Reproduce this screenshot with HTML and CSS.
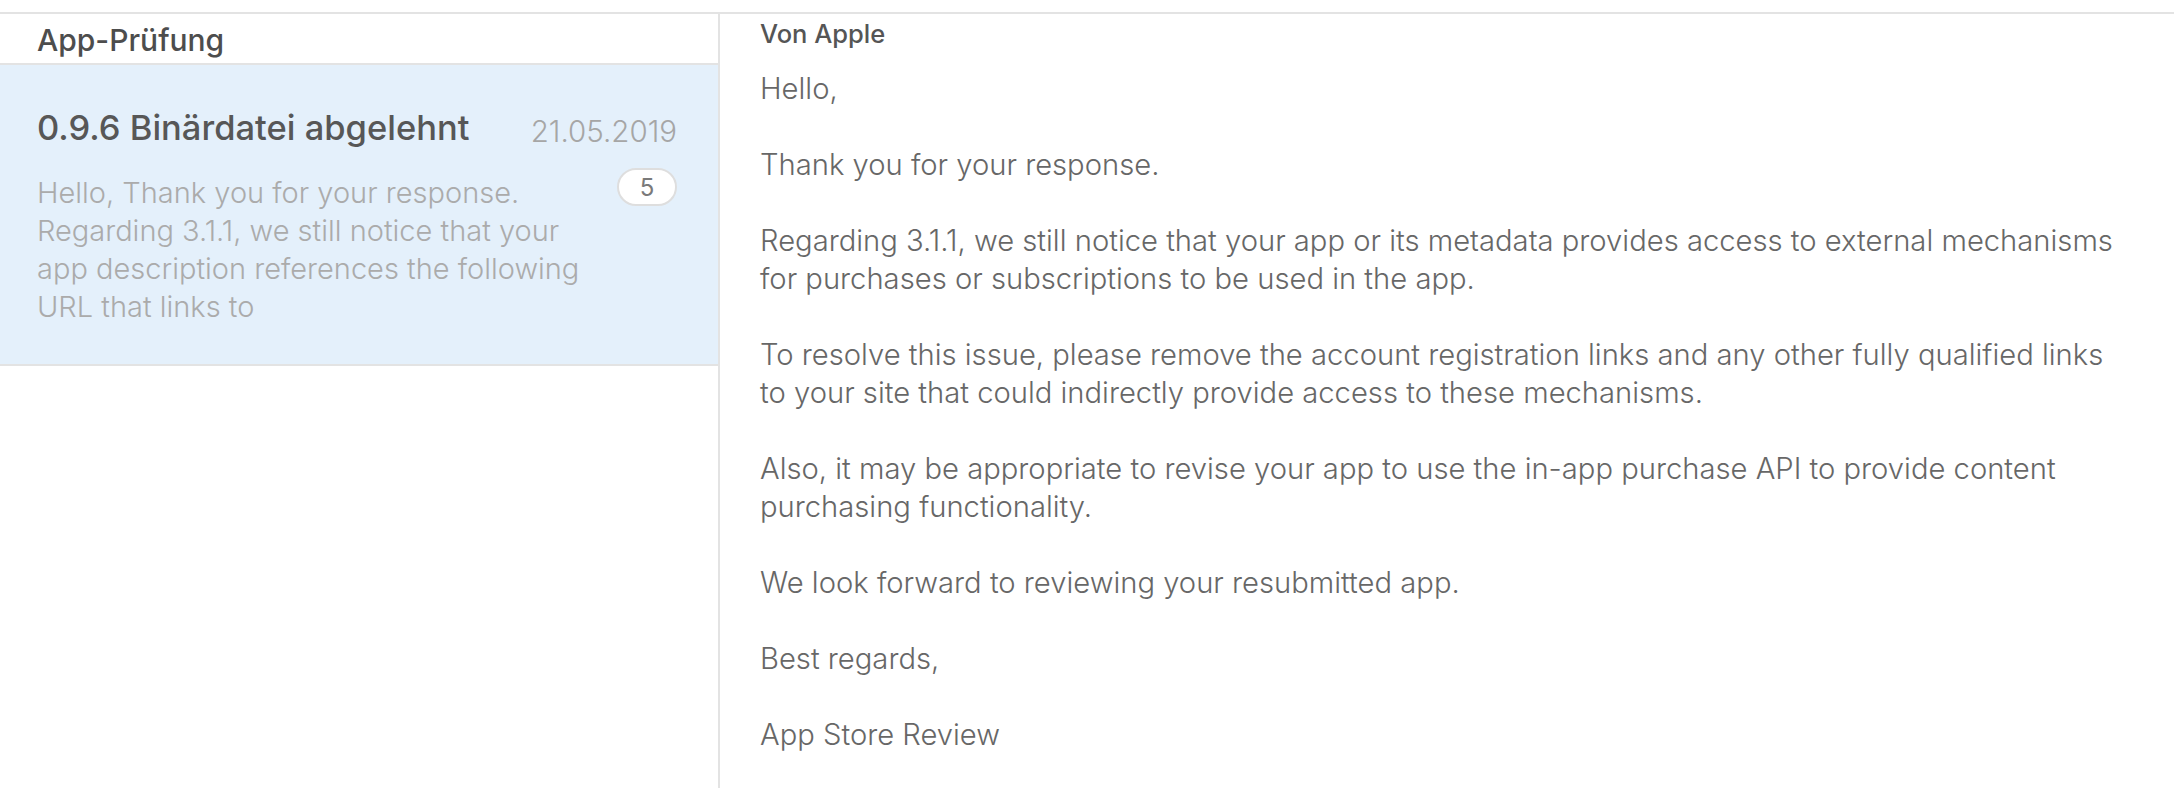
FILE: index.html
```html
<!DOCTYPE html>
<html lang="de">
<head>
   <meta charset="UTF-8">
   <meta name="viewport" content="width=device-width, initial-scale=1.0">
   <title>App-Prüfung</title>
   <link rel="stylesheet" href="styles.css">
</head>
<body>
   <div class="resolution-center">
      <aside class="sidebar">
         <div class="section-title">App-Prüfung</div>
         <div class="thread is-selected">
            <div class="thread-head">
               <span class="thread-title">0.9.6 Binärdatei abgelehnt</span>
               <span class="thread-date">21.05.2019</span>
            </div>
            <div class="thread-body">
               <p class="thread-preview">Hello, Thank you for your response. Regarding 3.1.1, we still notice that your app description references the following URL that links to</p>
               <span class="badge">5</span>
            </div>
         </div>
      </aside>

      <main class="message">
         <div class="message-from">Von Apple</div>
         <div class="message-text">
            <p>Hello,</p>
            <p>Thank you for your response.</p>
            <p>Regarding 3.1.1, we still notice that your app or its metadata provides access to external mechanisms<br>for purchases or subscriptions to be used in the app.</p>
            <p>To resolve this issue, please remove the account registration links and any other fully qualified links<br>to your site that could indirectly provide access to these mechanisms.</p>
            <p>Also, it may be appropriate to revise your app to use the in-app purchase API to provide content<br>purchasing functionality.</p>
            <p>We look forward to reviewing your resubmitted app.</p>
            <p>Best regards,</p>
            <p>App Store Review</p>
         </div>
      </main>
   </div>
</body>
</html>
```

FILE: styles.css
```css
body {
   margin: 0;
   font-family: 'Inter', 'Liberation Sans', sans-serif;
   background-color: #fff;
   color: #666;
}
.resolution-center {
   display: flex;
   margin-top: 12px;
   border-top: 2px solid #e3e3e3;
   height: calc(100vh - 14px);
   overflow: hidden;
}

/* left column */
.sidebar {
   width: 718px;
   flex-shrink: 0;
   border-right: 2px solid #e3e3e3;
}
.section-title {
   height: 51px;
   box-sizing: border-box;
   padding: 3px 0 0 37px;
   display: flex;
   align-items: center;
   font-size: 30px;
   font-weight: 500;
   color: #4d4d4d;
   border-bottom: 2px solid #e3e3e3;
}
.thread {
   height: 301px;
   box-sizing: border-box;
   padding: 40px 41px 0 37px;
   border-bottom: 2px solid #e3e3e3;
}
.thread.is-selected {
   background-color: #e4f0fb;
}
.thread-head {
   display: flex;
   justify-content: space-between;
   align-items: center;
   height: 44px;
}
.thread-title {
   font-size: 34.5px;
   font-weight: 500;
   color: #575757;
}
.thread-date {
   font-size: 29.5px;
   font-weight: 300;
   color: #a6a6a6;
   padding-top: 7px;
}
.thread-body {
   display: flex;
   justify-content: space-between;
   align-items: flex-start;
   margin-top: 19px;
}
.thread-preview {
   margin: 6px 0 0;
   width: 560px;
   font-size: 29px;
   font-weight: 300;
   line-height: 38px;
   color: #ababab;
}
.badge {
   width: 60px;
   height: 38px;
   box-sizing: border-box;
   border: 2px solid #dedede;
   border-radius: 19px;
   background-color: #fff;
   display: flex;
   justify-content: center;
   align-items: center;
   font-size: 24px;
   color: #7a7a7a;
}

/* right column */
.message {
   flex: 1;
   padding: 5px 40px 0 40px;
}
.message-from {
   font-size: 25.5px;
   font-weight: 500;
   line-height: 30px;
   color: #555;
}
.message-text {
   margin-top: 21px;
}
.message-text p {
   margin: 0 0 38px;
   font-size: 29.2px;
   font-weight: 300;
   line-height: 38px;
   color: #676767;
}
```
